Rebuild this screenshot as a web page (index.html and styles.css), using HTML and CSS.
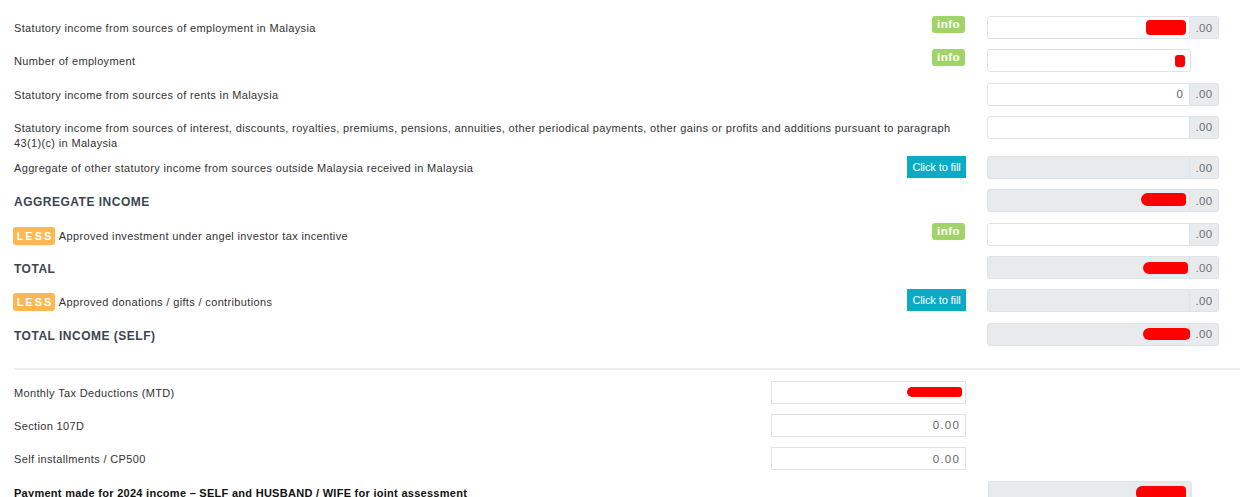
FILE: index.html
```html
<!DOCTYPE html>
<html lang="en">
<head>
<meta charset="utf-8">
<title>Income</title>
<link rel="stylesheet" href="styles.css">
</head>
<body>
<div class="page">
  <div class="row">
    <div class="label">Statutory income from sources of employment in Malaysia</div>
    <span class="badge-info">info</span>
    <div class="field">
      <div class="input"><span class="mark m1"></span></div>
      <div class="addon">.00</div>
    </div>
  </div>
  <div class="row">
    <div class="label">Number of employment</div>
    <span class="badge-info">info</span>
    <div class="field field-short">
      <div class="input"><span class="mark m2"></span></div>
    </div>
  </div>
  <div class="row">
    <div class="label">Statutory income from sources of rents in Malaysia</div>
    <div class="field">
      <div class="input"><span class="val">0</span></div>
      <div class="addon">.00</div>
    </div>
  </div>
  <div class="row">
    <div class="label label-long">Statutory income from sources of interest, discounts, royalties, premiums, pensions, annuities, other periodical payments, other gains or profits and additions pursuant to paragraph <span class="nowrap">43(1)(c)</span> in Malaysia</div>
    <div class="field">
      <div class="input"></div>
      <div class="addon">.00</div>
    </div>
  </div>
  <div class="row">
    <div class="label">Aggregate of other statutory income from sources outside Malaysia received in Malaysia</div>
    <span class="btn-fill">Click to fill</span>
    <div class="field">
      <div class="input disabled"></div>
      <div class="addon">.00</div>
    </div>
  </div>
  <div class="row">
    <div class="label heading">AGGREGATE INCOME</div>
    <div class="field">
      <div class="input disabled"><span class="mark m3"></span></div>
      <div class="addon">.00</div>
    </div>
  </div>
  <div class="row">
    <div class="label"><span class="badge-less">LESS</span> Approved investment under angel investor tax incentive</div>
    <span class="badge-info">info</span>
    <div class="field">
      <div class="input"></div>
      <div class="addon">.00</div>
    </div>
  </div>
  <div class="row">
    <div class="label heading">TOTAL</div>
    <div class="field">
      <div class="input disabled"><span class="mark m4"></span></div>
      <div class="addon">.00</div>
    </div>
  </div>
  <div class="row">
    <div class="label"><span class="badge-less">LESS</span> Approved donations / gifts / contributions</div>
    <span class="btn-fill">Click to fill</span>
    <div class="field">
      <div class="input disabled"></div>
      <div class="addon">.00</div>
    </div>
  </div>
  <div class="row">
    <div class="label heading">TOTAL INCOME (SELF)</div>
    <div class="field">
      <div class="input disabled"><span class="mark m5"></span></div>
      <div class="addon">.00</div>
    </div>
  </div>

  <hr class="divider">

  <div class="row row-lower">
    <div class="label">Monthly Tax Deductions (MTD)</div>
    <div class="field field-lower">
      <div class="input"><span class="mark m6"></span></div>
    </div>
  </div>
  <div class="row row-lower">
    <div class="label">Section 107D</div>
    <div class="field field-lower">
      <div class="input"><span class="val">0.00</span></div>
    </div>
  </div>
  <div class="row row-lower">
    <div class="label">Self installments / CP500</div>
    <div class="field field-lower">
      <div class="input"><span class="val">0.00</span></div>
    </div>
  </div>
  <div class="row row-pay">
    <div class="label label-strong">Payment made for 2024 income – SELF and HUSBAND / WIFE for joint assessment</div>
    <div class="field field-pay">
      <div class="input disabled"><span class="mark m7"></span></div>
    </div>
  </div>
</div>
</body>
</html>
```

FILE: styles.css
```css
* { box-sizing: border-box; }

html, body {
  margin: 0;
  padding: 0;
  background: #ffffff;
}

body {
  font-family: "Liberation Sans", Arial, sans-serif;
  font-size: 11px;
  color: #333333;
  overflow: hidden;
}

.page {
  padding: 16px 0 0 14px;
}

.row {
  display: flex;
  align-items: flex-start;
  margin-bottom: 10.3px;
  padding-right: 21px;
}

.label {
  flex: 1;
  padding-top: 5px;
  margin-bottom: -5px;
  line-height: 15px;
  letter-spacing: 0.35px;
  color: #333333;
}

.label-long {
  margin-right: 22px;
}

.nowrap {
  white-space: nowrap;
}

.heading {
  padding-top: 6px;
  margin-bottom: -6px;
  font-size: 12px;
  font-weight: bold;
  letter-spacing: 0.5px;
  color: #3b4651;
}

.label-strong {
  font-weight: bold;
  color: #111111;
  letter-spacing: 0.28px;
}

.badge-info {
  flex: none;
  width: 33px;
  height: 17px;
  margin-right: 22px;
  border-radius: 3px;
  background: #a0d468;
  color: #ffffff;
  font-weight: bold;
  font-size: 11.5px;
  letter-spacing: 0.5px;
  line-height: 17px;
  text-align: center;
}

.btn-fill {
  flex: none;
  width: 59px;
  height: 22px;
  margin-right: 21px;
  background: #0aacc5;
  color: #ffffff;
  font-size: 11px;
  line-height: 22px;
  text-align: center;
  letter-spacing: -0.1px;
}

.badge-less {
  display: inline-block;
  width: 42px;
  height: 18px;
  margin-left: -1px;
  margin-right: 1px;
  border-radius: 3px;
  background: #ffb752;
  color: #ffffff;
  font-weight: bold;
  font-size: 11px;
  line-height: 18px;
  letter-spacing: 2px;
  text-indent: 2px;
  text-align: center;
  vertical-align: middle;
  position: relative;
  top: -1px;
}

.field {
  flex: none;
  display: flex;
  width: 232px;
  height: 23px;
}

.field-short {
  width: 204px;
  margin-right: 28px;
}

.input {
  flex: 1;
  display: flex;
  align-items: center;
  justify-content: flex-end;
  padding-right: 3px;
  border: 1px solid #dfe2e6;
  border-radius: 3px 0 0 3px;
  background: #ffffff;
}

.field-short .input,
.field-pay .input {
  border-radius: 3px;
}

.field-lower .input {
  border-radius: 0;
}

.input.disabled {
  background: #e8ebee;
}

.addon {
  flex: none;
  width: 29px;
  display: flex;
  align-items: center;
  justify-content: center;
  border: 1px solid #dfe2e6;
  border-left: none;
  border-radius: 0 3px 3px 0;
  background: #e8ebee;
  color: #6a6f75;
  font-size: 11.5px;
  letter-spacing: 0.3px;
}

.val {
  color: #666666;
  font-size: 11.5px;
  letter-spacing: 1.2px;
  padding-right: 2px;
}

.mark {
  display: block;
  background: #ff0000;
  border-radius: 4px;
}

.m1 { width: 40px; height: 15px; }
.m2 { width: 10px; height: 12px; margin-right: 2px; border-radius: 3px; }
.m3 { width: 45px; height: 13px; border-radius: 7px 4px 4px 7px; margin-top: -2px; }
.m4 { width: 45px; height: 12px; margin-right: -2px; border-radius: 6px 4px 4px 6px; }
.m5 { width: 48px; height: 12px; margin-right: -5px; border-radius: 6px; }
.m6 { width: 55px; height: 10px; border-radius: 5px 3px 3px 5px; }
.m7 { width: 50px; height: 14px; margin-right: 2px; margin-top: 4px; border-radius: 6px 4px 4px 6px; }

.divider {
  height: 2px;
  margin: 22px 0 11px 0;
  border: none;
  background: #eeeeee;
}

.row-lower {
  padding-right: 274px;
}

.field-lower {
  width: 195px;
}

.row-pay {
  padding-right: 48px;
}

.field-pay {
  width: 204px;
}

.field-pay .input {
  align-items: flex-start;
}
```
